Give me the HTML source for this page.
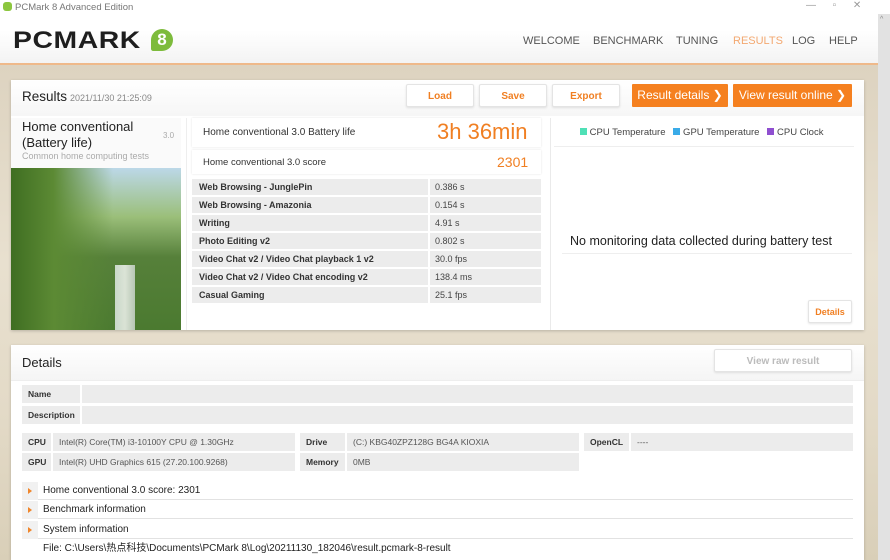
<!DOCTYPE html>
<html><head><meta charset="utf-8"><style>
*{margin:0;padding:0;box-sizing:border-box}
body{width:890px;height:560px;overflow:hidden;font-family:"Liberation Sans","Noto Sans CJK SC",sans-serif;background:#e6dccb;position:relative}
.a{position:absolute}
.btn{position:absolute;height:23px;background:#fff;border:1px solid #e4e4e4;border-radius:2px;color:#f07f22;font-weight:bold;font-size:10px;text-align:center;line-height:23px;box-shadow:0 1px 2px rgba(0,0,0,.1)}
.obtn{position:absolute;height:23px;background:#f5801f;color:#fff;font-size:12px;line-height:23px;text-align:center;border-radius:1px}
.row{position:absolute;left:192px;width:349px;height:16px;font-size:9px;line-height:16px}
.row .k{position:absolute;left:0;width:236px;height:16px;background:#ececec;padding-left:7px;font-weight:bold;color:#333}
.row .v{position:absolute;left:238px;width:111px;height:16px;background:#ececec;padding-left:5px;color:#444}
.c{position:absolute;background:#ececec;font-size:8.5px;line-height:18px;color:#555;padding-left:6px;height:18px}
.b{font-weight:bold;color:#333}
.nav{position:absolute;top:35px;font-size:11px;color:#555}
.exp{position:absolute;left:22px;width:831px;height:18px;font-size:10px;line-height:18px;color:#222}
.exp .t{position:absolute;left:0;width:16px;height:18px;background:#f1f1f1}
.exp .t:after{content:"";position:absolute;left:6px;top:6px;border-left:4px solid #f0862b;border-top:3px solid transparent;border-bottom:3px solid transparent}
.exp span{position:absolute;left:21px}
.exp .ln{position:absolute;left:16px;right:0;bottom:0;height:1px;background:#e2e2e2}
</style></head><body>
<div class="a" style="left:0;top:0;width:890px;height:64px;background:linear-gradient(#fff,#fff 30px,#f3f3f3)"></div>
<div class="a" style="left:0;top:63px;width:878px;height:2px;background:#efb98a"></div>
<div class="a" style="left:0;top:65px;width:878px;height:495px;background:linear-gradient(180deg,#ddd3c0,#e8e0cf 40%,#e3dac7 70%,#d9cfb8)"></div>
<div class="a" style="left:878px;top:14px;width:12px;height:546px;background:#e2e2e2"></div>
<div class="a" style="left:880px;top:16px;font-size:7px;color:#888">^</div>
<div class="a" style="left:3px;top:2px;width:9px;height:9px;background:#8cc63f;border-radius:3px"></div>
<div class="a" style="left:15px;top:2px;font-size:9.5px;color:#777">PCMark 8 Advanced Edition</div>
<div class="a" style="left:806px;top:0;font-size:10px;color:#999">—&nbsp;&nbsp;&nbsp;&nbsp;&nbsp;&nbsp;▫&nbsp;&nbsp;&nbsp;&nbsp;&nbsp;&nbsp;✕</div>
<div class="a" style="left:13px;top:27px;font-size:24px;font-weight:900;color:#1e1e1e;letter-spacing:0.5px;transform:scaleX(1.18);transform-origin:left">PCMARK</div>
<div class="a" style="left:151px;top:29px;width:22px;height:22px;border-radius:50% 50% 50% 10%;background:#7dbb3c;color:#fff;font-weight:bold;font-size:17px;line-height:22px;text-align:center">8</div>
<div class="nav" style="left:523px">WELCOME</div>
<div class="nav" style="left:593px">BENCHMARK</div>
<div class="nav" style="left:676px">TUNING</div>
<div class="nav" style="left:733px;color:#f3a870">RESULTS</div>
<div class="nav" style="left:792px">LOG</div>
<div class="nav" style="left:829px">HELP</div>

<div class="a" style="left:11px;top:80px;width:853px;height:250px;background:#fff;box-shadow:0 1px 3px rgba(0,0,0,.2)"></div>
<div class="a" style="left:11px;top:80px;width:853px;height:36px;background:linear-gradient(#fff,#f6f6f6)"></div>
<div class="a" style="left:22px;top:89px;font-size:13.5px;color:#222">Results</div>
<div class="a" style="left:70px;top:93px;font-size:9px;color:#888">2021/11/30 21:25:09</div>
<div class="btn" style="left:406px;top:84px;width:68px">Load</div>
<div class="btn" style="left:479px;top:84px;width:68px">Save</div>
<div class="btn" style="left:552px;top:84px;width:68px">Export</div>
<div class="obtn" style="left:632px;top:84px;width:96px">Result details ❯</div>
<div class="obtn" style="left:733px;top:84px;width:119px">View result online ❯</div>

<div class="a" style="left:11px;top:118px;width:170px;height:50px;background:#fafafa"></div>
<div class="a" style="left:22px;top:119px;font-size:13px;line-height:16px;color:#222">Home conventional<br>(Battery life)</div>
<div class="a" style="left:163px;top:131px;font-size:8px;color:#aaa">3.0</div>
<div class="a" style="left:22px;top:151px;font-size:9px;color:#aaa">Common home computing tests</div>
<div class="a" style="left:11px;top:168px;width:170px;height:162px;background:linear-gradient(90deg,#3f6e22 0%,#5c8a34 25%,transparent 60%),linear-gradient(180deg,#bcd8e8 0%,#9bbf7a 30%,#56803a 55%,#4b7a30 100%)"></div>
<div class="a" style="left:115px;top:265px;width:20px;height:65px;background:linear-gradient(90deg,#dfe8e4,#f3f5f2,#c9d3cb);opacity:.85"></div>
<div class="a" style="left:186px;top:118px;width:1px;height:212px;background:#eee"></div>

<div class="a" style="left:192px;top:118px;width:349px;height:29px;background:#fff;box-shadow:0 0 2px rgba(0,0,0,.12)"></div>
<div class="a" style="left:203px;top:127px;font-size:10px;color:#333">Home conventional 3.0 Battery life</div>
<div class="a" style="left:437px;top:119px;font-size:22px;color:#f07f22">3h 36min</div>
<div class="a" style="left:192px;top:150px;width:349px;height:24px;background:#fff;box-shadow:0 0 2px rgba(0,0,0,.12)"></div>
<div class="a" style="left:203px;top:157px;font-size:9.5px;color:#333">Home conventional 3.0 score</div>
<div class="a" style="left:497px;top:154px;font-size:14px;color:#f07f22">2301</div>
<div class="row" style="top:179px"><div class="k">Web Browsing - JunglePin</div><div class="v">0.386 s</div></div>
<div class="row" style="top:197px"><div class="k">Web Browsing - Amazonia</div><div class="v">0.154 s</div></div>
<div class="row" style="top:215px"><div class="k">Writing</div><div class="v">4.91 s</div></div>
<div class="row" style="top:233px"><div class="k">Photo Editing v2</div><div class="v">0.802 s</div></div>
<div class="row" style="top:251px"><div class="k">Video Chat v2 / Video Chat playback 1 v2</div><div class="v">30.0 fps</div></div>
<div class="row" style="top:269px"><div class="k">Video Chat v2 / Video Chat encoding v2</div><div class="v">138.4 ms</div></div>
<div class="row" style="top:287px"><div class="k">Casual Gaming</div><div class="v">25.1 fps</div></div>
<div class="a" style="left:550px;top:118px;width:1px;height:212px;background:#eaeaea"></div>
<div class="a" style="left:580px;top:127px;font-size:9.5px;color:#444;white-space:nowrap"><span style="display:inline-block;width:7px;height:7px;background:#4fe0b6"></span> CPU Temperature &nbsp;&nbsp;<span style="display:inline-block;width:7px;height:7px;background:#3aabe8"></span> GPU Temperature &nbsp;&nbsp;<span style="display:inline-block;width:7px;height:7px;background:#8f4fd0"></span> CPU Clock</div>
<div class="a" style="left:554px;top:146px;width:300px;height:1px;background:#eee"></div>
<div class="a" style="left:570px;top:234px;font-size:12.5px;color:#222">No monitoring data collected during battery test</div>
<div class="a" style="left:562px;top:253px;width:290px;height:1px;background:#eee"></div>
<div class="btn" style="left:808px;top:300px;width:44px;font-size:9px">Details</div>

<div class="a" style="left:11px;top:345px;width:853px;height:215px;background:#fff;box-shadow:0 1px 3px rgba(0,0,0,.2)"></div>
<div class="a" style="left:11px;top:345px;width:853px;height:36px;background:linear-gradient(#fff,#f5f5f5);border-bottom:1px solid #eee"></div>
<div class="a" style="left:22px;top:355px;font-size:13px;color:#222">Details</div>
<div class="btn" style="left:714px;top:349px;width:138px;color:#bbb;font-size:10px">View raw result</div>
<div class="c b" style="left:22px;top:385px;width:58px">Name</div>
<div class="c" style="left:82px;top:385px;width:771px"></div>
<div class="c b" style="left:22px;top:406px;width:58px">Description</div>
<div class="c" style="left:82px;top:406px;width:771px"></div>
<div class="c b" style="left:22px;top:433px;width:29px">CPU</div>
<div class="c" style="left:53px;top:433px;width:242px">Intel(R) Core(TM) i3-10100Y CPU @ 1.30GHz</div>
<div class="c b" style="left:22px;top:453px;width:29px">GPU</div>
<div class="c" style="left:53px;top:453px;width:242px">Intel(R) UHD Graphics 615 (27.20.100.9268)</div>
<div class="c b" style="left:300px;top:433px;width:45px">Drive</div>
<div class="c" style="left:347px;top:433px;width:232px">(C:) KBG40ZPZ128G BG4A KIOXIA</div>
<div class="c b" style="left:300px;top:453px;width:45px">Memory</div>
<div class="c" style="left:347px;top:453px;width:232px">0MB</div>
<div class="c b" style="left:584px;top:433px;width:45px">OpenCL</div>
<div class="c" style="left:631px;top:433px;width:222px">----</div>
<div class="exp" style="top:482px"><div class="t"></div><span>Home conventional 3.0 score: 2301</span><div class="ln"></div></div>
<div class="exp" style="top:501px"><div class="t"></div><span>Benchmark information</span><div class="ln"></div></div>
<div class="exp" style="top:521px"><div class="t"></div><span>System information</span><div class="ln"></div></div>
<div class="exp" style="top:540px"><span>File: C:\Users\热点科技\Documents\PCMark 8\Log\20211130_182046\result.pcmark-8-result</span></div>
</body></html>
